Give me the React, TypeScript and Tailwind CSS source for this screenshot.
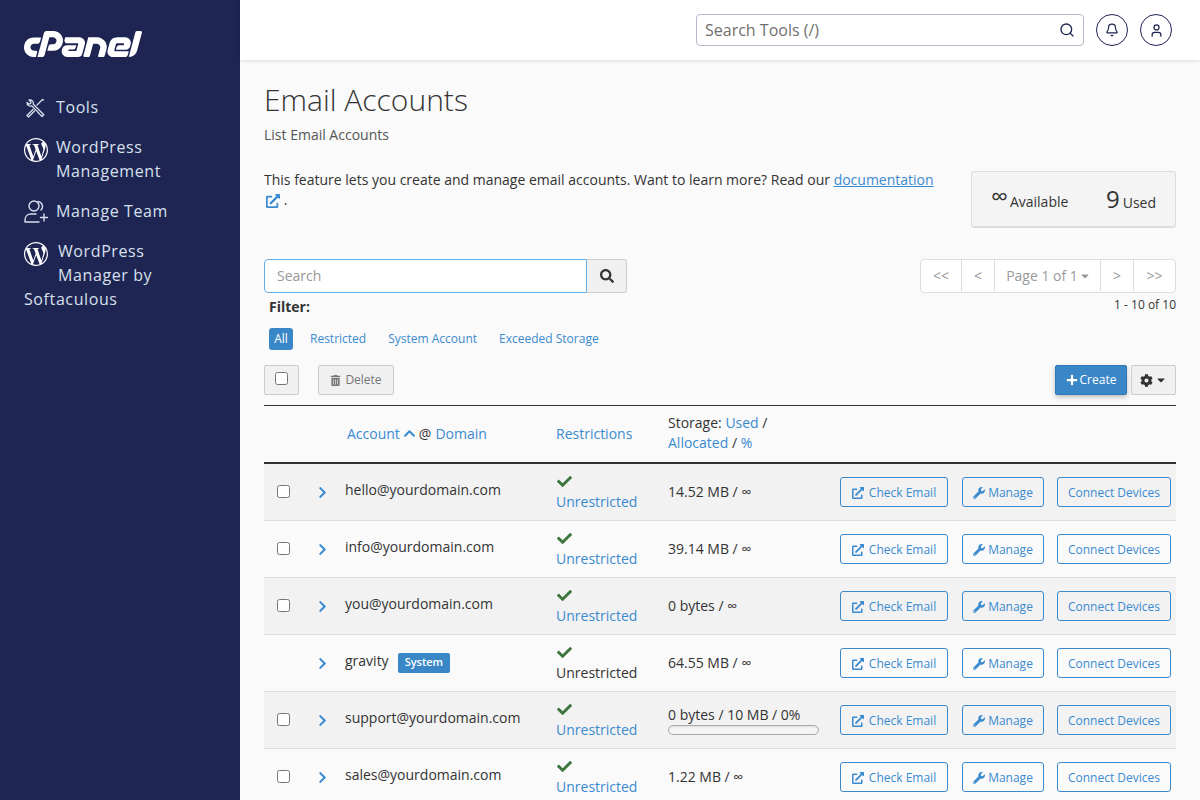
import React from 'react';
import { FaCheck, FaPlus, FaCog, FaSearch, FaWrench, FaChevronUp, FaChevronRight, FaCaretDown, FaTrashAlt, FaExternalLinkAlt } from 'react-icons/fa';
import { SiCpanel, SiWordpress } from 'react-icons/si';
import { Search, Bell, User } from 'lucide-react';

const ToolsIcon = () => (
  <svg width="24" height="24" viewBox="1 -1 24 24" fill="none" stroke="currentColor" strokeWidth="1.3" strokeLinecap="round" strokeLinejoin="round">
    <path d="M4 6.500a3.500 3.500 0 0 0 4.800 3.400L19 20.500l1.800-1.800L10.300 8.300A3.500 3.500 0 0 0 6 4l2 2-.4 1.600-1.700.4z" />
    <path d="M20.500 4l-1-.5-5.500 5.500M10 13.500L4 19.500l1.500 1.500 6-6" />
  </svg>
);

const TeamIcon = () => (
  <svg width="24" height="24" viewBox="0 0 24 24" fill="none" stroke="currentColor" strokeWidth="1.4" strokeLinecap="round">
    <circle cx="10" cy="7" r="5" />
    <path d="M14 2.500a5 5 0 0 1 3 8.500M1 23v-2c0-4 3-6 6-6h5M1 23h14M20 15v7M16.500 18.500h7" />
  </svg>
);

const Sidebar = () => (
  <aside className="w-[240px] shrink-0 bg-[#1f2552] text-[#d7e0ee] text-[16px] leading-[24px] tracking-[0.6px] px-6">
    <div className="h-[88px] flex items-center">
      <SiCpanel className="text-white w-[118px] h-[118px] shrink-0" />
    </div>
    <div className="flex items-center gap-[8px] h-[24px] mt-[7px]">
      <ToolsIcon />
      <span>Tools</span>
    </div>
    <div className="flex gap-[8px] mt-[16px]">
      <SiWordpress className="w-[24px] h-[24px] shrink-0 mt-[3px] text-white" />
      <span>WordPress<br />Management</span>
    </div>
    <div className="flex items-center gap-[8px] mt-[16px]">
      <TeamIcon />
      <span>Manage Team</span>
    </div>
    <div className="mt-[16px]">
      <div className="flex gap-[10px]">
        <SiWordpress className="w-[24px] h-[24px] shrink-0 mt-[3px] text-white" />
        <span>WordPress<br />Manager by</span>
      </div>
      <div>Softaculous</div>
    </div>
  </aside>
);

const TopBar = () => (
  <header className="h-[60px] shrink-0 bg-white shadow-[0_1px_4px_rgba(0,0,0,0.12)] flex items-center justify-end pr-[28px] gap-[12px] relative">
    <div className="w-[388px] h-[32px] border border-[#b9b7c9] rounded-[4px] flex items-center justify-between px-[8px] text-[16px] text-[#6f6f6f]">
      <span>Search Tools (/)</span>
      <Search size={16} strokeWidth={2} className="text-[#1f2552]" />
    </div>
    <div className="w-[32px] h-[32px] rounded-full border border-[#1f2552] flex items-center justify-center text-[#1f2552]">
      <Bell size={14} strokeWidth={2} />
    </div>
    <div className="w-[32px] h-[32px] rounded-full border border-[#1f2552] flex items-center justify-center text-[#1f2552]">
      <User size={15} strokeWidth={2} />
    </div>
  </header>
);

const linkBlue = 'text-[#3a8ad0]';

type Row = { email: string; storage: string; system?: boolean; bar?: boolean };

const rows: Row[] = [
  { email: 'hello@yourdomain.com', storage: '14.52 MB / ∞' },
  { email: 'info@yourdomain.com', storage: '39.14 MB / ∞' },
  { email: 'you@yourdomain.com', storage: '0 bytes / ∞' },
  { email: 'gravity', storage: '64.55 MB / ∞', system: true },
  { email: 'support@yourdomain.com', storage: '0 bytes / 10 MB / 0%', bar: true },
  { email: 'sales@yourdomain.com', storage: '1.22 MB / ∞' },
];

const Checkbox = () => (
  <span className="block w-[13px] h-[13px] bg-white border border-[#767676] rounded-[2.500px]" />
);

const OutlineBtn = ({ className, children }: { className: string; children: React.ReactNode }) => (
  <div className={`h-[30px] pt-[1px] border border-[#3a8ad0] rounded-[3px] flex items-center justify-center gap-[3px] text-[12px] ${linkBlue} ${className}`}>
    {children}
  </div>
);

const AccountRow = ({ row, index }: { row: Row; index: number }) => (
  <div className={`h-[57px] border-b border-[#dddddd] grid grid-cols-[81px_211px_112px_1fr] items-center text-[14px] text-[#333] ${index % 2 === 0 ? 'bg-[#f2f2f2]' : 'bg-[#fafafa]'}`}>
    <div className="flex items-center pl-[13px] gap-[26px]">
      <div className="w-[13px] mb-[1px]">{!row.system && <Checkbox />}</div>
      <FaChevronRight size={13} className={linkBlue} />
    </div>
    <div className="flex items-center mb-[5px]">
      <span>{row.email}</span>
      {row.system && (
        <span className="ml-[9px] mt-[4px] h-[20px] px-[7px] bg-[#3a87c8] text-white text-[11px] font-semibold rounded-[2px] flex items-center">System</span>
      )}
    </div>
    <div className="leading-[20px] pt-[2px]">
      <FaCheck size={15} className="text-[#3c763d] mb-[3px] ml-[1px]" />
      <div className={row.system ? 'text-[#333]' : linkBlue}>Unrestricted</div>
    </div>
    <div className="flex items-center justify-between pr-[5px]">
      <div className="w-[151px]">
        <div className="leading-[20px]">{row.storage}</div>
        {row.bar && <div className="h-[10px] rounded-[5px] border border-[#aaa] bg-[#f5f5f5] shadow-[inset_0_1px_2px_rgba(0,0,0,0.1)]" />}
      </div>
      <div className="flex gap-[13px]">
        <OutlineBtn className="w-[108px] mr-[1px]">
          <FaExternalLinkAlt size={12} className="mr-[2px]" />
          Check Email
        </OutlineBtn>
        <OutlineBtn className="w-[82px]">
          <FaWrench size={12} />
          Manage
        </OutlineBtn>
        <OutlineBtn className="w-[114px]">Connect Devices</OutlineBtn>
      </div>
    </div>
  </div>
);

const GrayBtn = ({ className, children }: { className: string; children: React.ReactNode }) => (
  <div className={`h-[30px] bg-[#f0f0f0] border border-[#cccccc] rounded-[2px] flex items-center justify-center ${className}`}>
    {children}
  </div>
);

export default function App() {
  return (
    <div className="h-screen flex overflow-hidden bg-[#fafafa] text-[#333]" style={{ fontFamily: '"Open Sans", sans-serif' }}>
      <Sidebar />
      <div className="flex-1 min-w-0 flex flex-col">
        <TopBar />
        <main className="flex-1 px-[24px] overflow-hidden">
          <h1 className="text-[30px] font-light leading-[40px] mt-[20px] text-[#333]">Email Accounts</h1>
          <p className="text-[14px] leading-[20px] mt-[5px] text-[#555]">List Email Accounts</p>

          <div className="flex justify-between mt-[26px]">
            <p className="w-[680px] text-[14px] leading-[20px] -mt-[1px]">
              This feature lets you create and manage email accounts. Want to learn more? Read our{' '}
              <span className={`${linkBlue} underline`}>documentation</span>{' '}
              <FaExternalLinkAlt size={14} className={`inline ${linkBlue} mb-[1px] ml-[2px]`} /> .
            </p>
            <div className="w-[205px] h-[57px] bg-[#f4f4f4] border border-[#dddddd] border-b-2 rounded-[3px] flex items-center justify-between px-[19px] pt-[2px] text-[14px]">
              <span className="flex items-baseline gap-[2px]">
                <span className="text-[24px] leading-[20px] relative top-[-2px]">∞</span> Available
              </span>
              <span className="flex items-baseline gap-[3px]">
                <span className="text-[24px] leading-[24px]">9</span> Used
              </span>
            </div>
          </div>

          <div className="flex justify-between mt-[31px]">
            <div className="flex h-[34px]">
              <div className="w-[323px] pb-[1px] bg-white border border-[#66afe9] rounded-l-[4px] px-[12px] flex items-center text-[14px] text-[#999]">Search</div>
              <div className="w-[40px] bg-[#f0f0f0] border border-l-0 border-[#cccccc] rounded-r-[3px] flex items-center justify-center">
                <FaSearch size={14} />
              </div>
            </div>
            <div className="text-right">
              <div className="flex h-[34px] pb-[1px] border border-[#dddddd] rounded-[4px] bg-white text-[14px] text-[#999] divide-x divide-[#dddddd]">
                <div className="w-[41px] flex items-center justify-center">&lt;&lt;</div>
                <div className="w-[33px] flex items-center justify-center">&lt;</div>
                <div className="w-[106px] pl-[2px] flex items-center justify-center gap-[1px]">Page 1 of 1<FaCaretDown size={12} /></div>
                <div className="w-[33px] flex items-center justify-center">&gt;</div>
                <div className="w-[41px] flex items-center justify-center">&gt;&gt;</div>
              </div>
              <div className="text-[12px] leading-[16px] mt-[4px]">1 - 10 of 10</div>
            </div>
          </div>

          <div className="pl-[5px] text-[14px] font-bold leading-[20px] -mt-[16px]">Filter:</div>
          <div className="flex items-center text-[12px] pl-[5px] mt-[11px] h-[22px] gap-[22px]">
            <span className="w-[24px] h-[22px] bg-[#3a87c8] text-white rounded-[3px] flex items-center justify-center -mr-[5px]">All</span>
            <span className={linkBlue}>Restricted</span>
            <span className={linkBlue}>System Account</span>
            <span className={linkBlue}>Exceeded Storage</span>
          </div>

          <div className="flex items-center justify-between mt-[15px] h-[30px]">
            <div className="flex gap-[19px]">
              <GrayBtn className="w-[35px] pb-[3px]"><Checkbox /></GrayBtn>
              <GrayBtn className="w-[76px] gap-[4px] text-[12px] text-[#777]">
                <FaTrashAlt size={11} />
                Delete
              </GrayBtn>
            </div>
            <div className="flex gap-[4px]">
              <div className="w-[72px] h-[30px] bg-[#3a87c8] border border-[#2e79b9] rounded-[2px] text-white text-[12px] flex items-center justify-center gap-[2px] shadow-[0_2px_5px_rgba(0,0,0,0.25)]">
                <FaPlus size={12} />
                Create
              </div>
              <GrayBtn className="w-[45px] gap-[2px]">
                <FaCog size={13} />
                <FaCaretDown size={12} />
              </GrayBtn>
            </div>
          </div>

          <div className="mt-[10px] border-t border-[#333] border-b-2 border-b-[#333] h-[59px] pb-[2px] grid grid-cols-[83px_209px_112px_1fr] items-center text-[14px]">
            <div />
            <div className="flex items-center gap-[3px]">
              <span className={linkBlue}>Account</span>
              <FaChevronUp size={13} className={linkBlue} />
              <span>@</span>
              <span className={`${linkBlue} ml-[1px]`}>Domain</span>
            </div>
            <div className={linkBlue}>Restrictions</div>
            <div className="leading-[20px]">
              Storage: <span className={linkBlue}>Used</span> /<br />
              <span className={linkBlue}>Allocated</span> / <span className={linkBlue}>%</span>
            </div>
          </div>
          {rows.map((row, i) => (
            <AccountRow key={row.email} row={row} index={i} />
          ))}
        </main>
      </div>
    </div>
  );
}
